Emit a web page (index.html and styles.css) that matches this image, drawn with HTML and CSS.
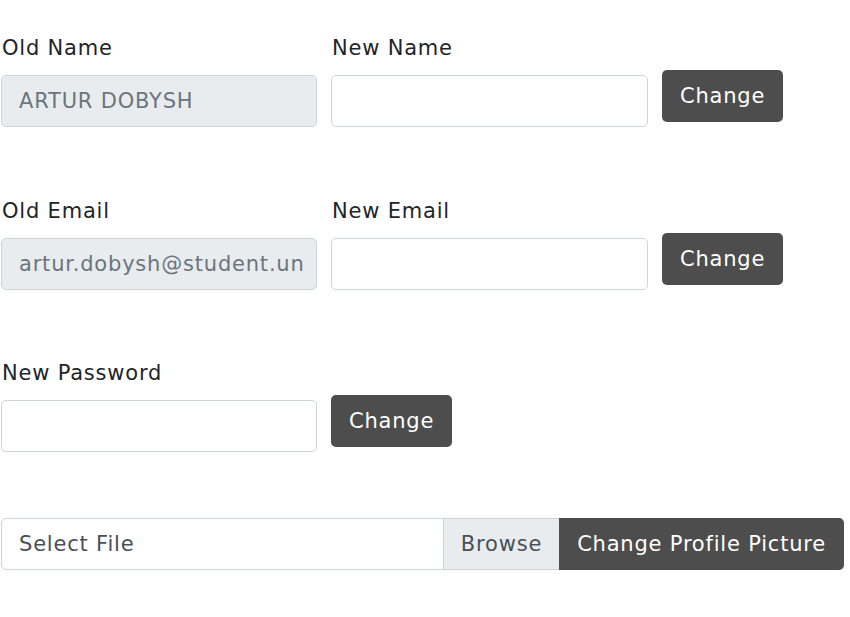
FILE: index.html
```html
<!DOCTYPE html>
<html>
<head>
<meta charset="utf-8">
<link rel="stylesheet" href="styles.css">
</head>
<body>
<div class="page">
  <div class="row">
    <div class="field">
      <label class="label">Old Name</label>
      <div class="input disabled">ARTUR DOBYSH</div>
    </div>
    <div class="field">
      <label class="label">New Name</label>
      <div class="input"></div>
    </div>
    <button class="btn">Change</button>
  </div>
  <div class="row">
    <div class="field">
      <label class="label">Old Email</label>
      <div class="input disabled">artur.dobysh@student.un</div>
    </div>
    <div class="field">
      <label class="label">New Email</label>
      <div class="input"></div>
    </div>
    <button class="btn">Change</button>
  </div>
  <div class="row">
    <div class="field">
      <label class="label">New Password</label>
      <div class="input"></div>
    </div>
    <button class="btn">Change</button>
  </div>
  <div class="file-group">
    <div class="file-name">Select File</div>
    <div class="file-browse">Browse</div>
    <button class="file-btn">Change Profile Picture</button>
  </div>
</div>
</body>
</html>
```
FILE: styles.css
```css
* { box-sizing: border-box; }
html, body { margin: 0; padding: 0; background: #fff; }
body {
  font-family: "DejaVu Sans", sans-serif;
  font-size: 21px;
  letter-spacing: 0.8px;
  color: #212529;
}
.page {
  padding: 30px 0 0 1px;
  width: 845px;
}
.row {
  display: flex;
  align-items: flex-start;
  gap: 14px;
  margin-bottom: 65.5px;
}
.field {
  display: flex;
  flex-direction: column;
}
.field:first-child { width: 316px; }
.field:nth-child(2) { width: 317px; }
.label {
  display: block;
  height: 36px;
  line-height: 30px;
  padding-top: 3px;
  margin-bottom: 9px;
  padding-left: 1px;
  color: #212529;
}
.input {
  height: 52px;
  border: 1px solid #ced4da;
  border-radius: 5px;
  background: #fff;
  padding: 0 17px;
  display: flex;
  align-items: center;
  white-space: nowrap;
  overflow: hidden;
  color: #495057;
}
.input.disabled {
  background: #e9ecef;
  color: #6c757d;
}
.btn {
  margin-top: 40px;
  height: 52px;
  padding: 0 18px;
  border: none;
  border-radius: 5px;
  background: #4d4d4d;
  color: #fff;
  font-family: inherit;
  font-size: 21px;
  letter-spacing: 0.8px;
}
.file-group {
  display: flex;
  width: 843px;
  height: 52px;
  border: 1px solid #ced4da;
  border-radius: 5px;
}
.file-name {
  flex: 1;
  display: flex;
  align-items: center;
  padding: 0 17px;
  color: #495057;
}
.file-browse {
  display: flex;
  align-items: center;
  padding: 0 17px;
  background: #e9ecef;
  border-left: 1px solid #ced4da;
  color: #495057;
}
.file-btn {
  margin: -1px -1px -1px 0;
  height: 52px;
  padding: 0 18px;
  border: none;
  border-radius: 0 5px 5px 0;
  background: #4d4d4d;
  color: #fff;
  font-family: inherit;
  font-size: 21px;
  letter-spacing: 0.8px;
}
```
